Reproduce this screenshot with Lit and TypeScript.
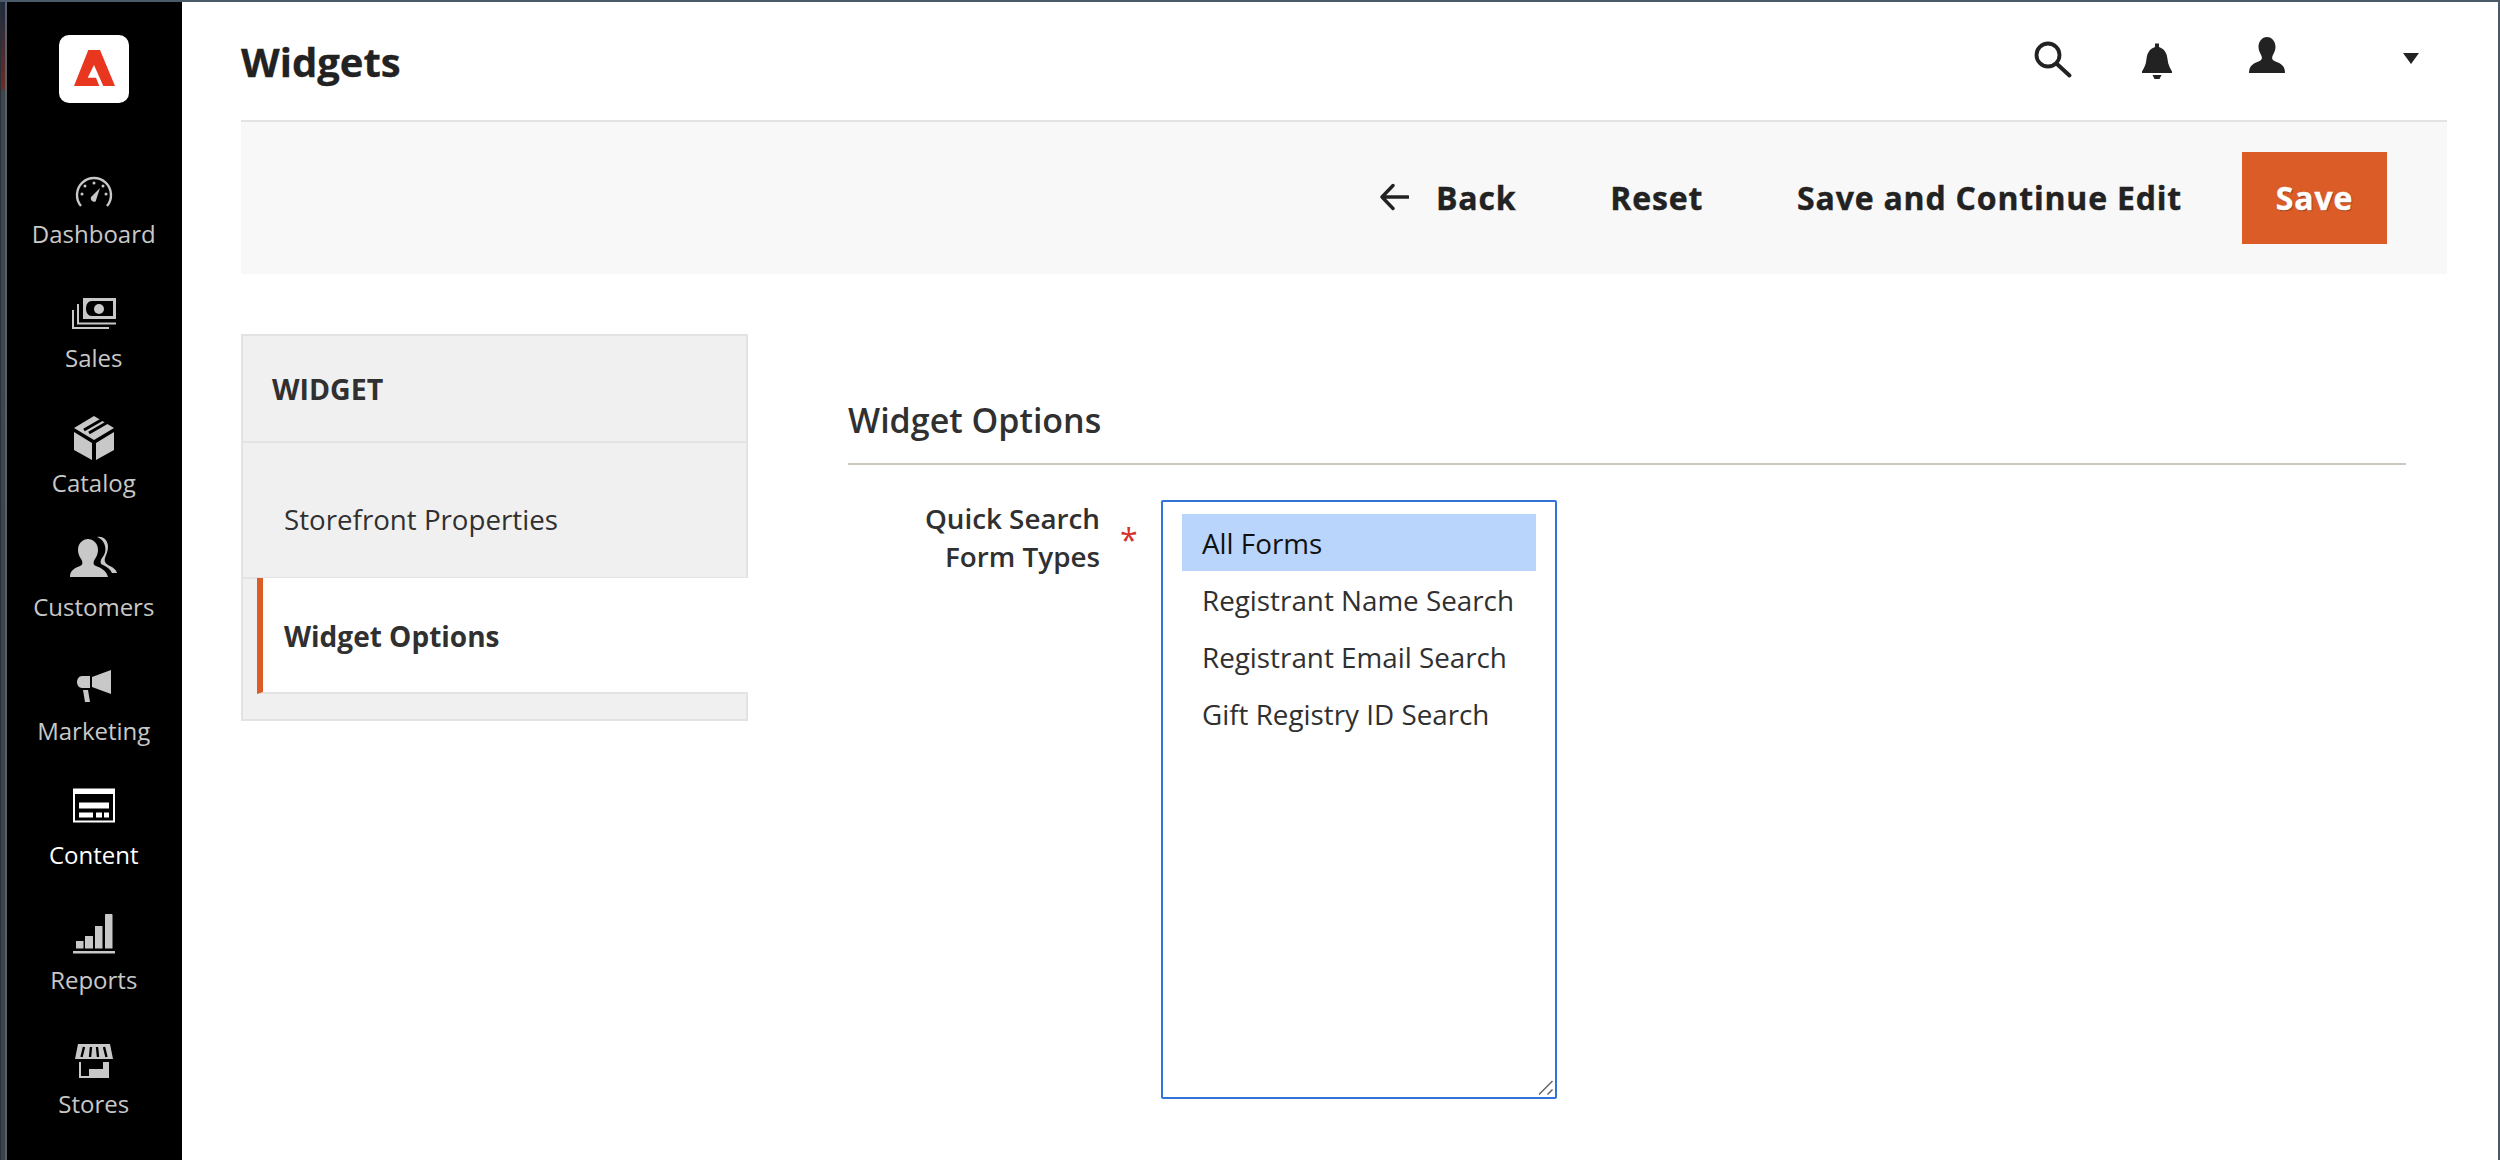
import { LitElement, html, css, svg } from 'lit';
import { customElement } from 'lit/decorators.js';

const navItems = [
  {
    label: 'Dashboard',
    icon: svg`<path d="M17 47a17 17 0 1 1 26 0" fill="none" stroke="currentColor" stroke-width="2.4"/>
      <circle cx="30" cy="24" r="1.5" fill="currentColor"/><circle cx="21" cy="27" r="1.5" fill="currentColor"/><circle cx="39" cy="27" r="1.5" fill="currentColor"/>
      <circle cx="18" cy="35" r="1.5" fill="currentColor"/><circle cx="42" cy="35" r="1.5" fill="currentColor"/>
      <path d="M36 29l-9 9a3.4 3.4 0 0 0 4.6 4.4z" fill="currentColor"/>`,
  },
  {
    label: 'Sales',
    icon: svg`<path fill-rule="evenodd" d="M19 15h33v21H19zM28 18c-4 0-6 3.500-6 7.500s2 7.500 6 7.500h21V18z" fill="currentColor"/>
      <circle cx="35" cy="26" r="5" fill="currentColor"/>
      <path d="M14 21v19.500h38M9 27v18h36" fill="none" stroke="currentColor" stroke-width="2"/>`,
  },
  {
    label: 'Catalog',
    icon: svg`<path d="M30 8l20 12-20 12-20-12z" fill="currentColor"/>
      <path d="M20 22l19-11M25 25l19-11" fill="none" stroke="#000" stroke-width="3"/>
      <path d="M10 24l18 11v17l-18-10zM50 24L32 35v17l18-10z" fill="currentColor"/>`,
  },
  {
    label: 'Customers',
    icon: svg`<path d="M6 45c0-7 5-9 10-11 3-1 3-4 1-7-2-3-3-6-3-9 0-7 5-11 10-11s10 4 10 11c0 3-1 6-3 9-2 3-2 6 1 7 5 2 10 4 12 11z" fill="currentColor"/>
      <path d="M33 5c7-1 11 4 11 10 0 4-2 8-3 11-1 3 0 5 3 7 4 2 8 4 9 8l-5 0c-2-4-5-6-9-8-3-1-3-4-1-7 3-4 4-7 3-12-1-4-3-7-8-9z" fill="currentColor"/>`,
  },
  {
    label: 'Marketing',
    icon: svg`<path d="M28 21l19-7v24l-19-7z" fill="currentColor"/>
      <path d="M26 20v12h-8c-3 0-5-3-5-6s2-6 5-6z" fill="currentColor"/>
      <path d="M19 34h5l2 12h-5z" fill="currentColor"/>`,
  },
  {
    label: 'Content',
    icon: svg`<path fill-rule="evenodd" d="M9 8.500h42v34H9zM11 14v26.500h38V14z" fill="currentColor"/>
      <path d="M15 22.500h30v6H15zM15 32.500h14v5H15zM32 32.500h6v5h-6zM40 32.500h5v5h-5z" fill="currentColor"/>`,
  },
  {
    label: 'Reports',
    icon: svg`<path d="M9 46h42v2.500H9zM12 36h7.500v7.500H12zM21 31h8v12.500h-8zM31 21h7.500v22.500H31zM41 10c0-.6.4-1 1-1h5.500c.6 0 1 .4 1 1v33.500H41z" fill="currentColor"/>`,
  },
  {
    label: 'Stores',
    icon: svg`<path d="M14 15h32l3 15H11z" fill="currentColor"/>
      <path d="M20 18l-2.500 10M27 18l-1 10M33 18l1 10M40 18l2.500 10" fill="none" stroke="#000" stroke-width="2.400"/>
      <path d="M16 33v15h28V33" fill="none" stroke="currentColor" stroke-width="2"/>
      <path d="M25 33v7h14v-7h6v16H25z" fill="currentColor"/>`,
  },
];

@customElement('app-root')
export class AppRoot extends LitElement {
  static styles = css`
    :host {
      display: block;
      height: 1160px;
      overflow: hidden;
      font-family: 'Open Sans', sans-serif;
      color: #303030;
      background: #4a5a68;
      padding: 2px 2px 0 0;
      box-sizing: border-box;
    }

    .window {
      display: flex;
      height: 100%;
      background: #fff;
    }

    .edge {
      width: 7px;
      flex: none;
      background: linear-gradient(#1c2a44 0, #6b2a24 85px, #3a4650 90px, #39434d 100%);
      border-left: 1px solid #2a3036;
      border-right: 2px solid #5a5f64;
      box-sizing: border-box;
    }

    .sidebar {
      width: 175px;
      flex: none;
      box-sizing: border-box;
      padding-right: 1.5px;
      background: #000;
      color: #c8c8c8;
      display: flex;
      flex-direction: column;
      align-items: center;
    }

    .logo {
      width: 70px;
      height: 68px;
      margin-top: 33px;
      margin-bottom: 56px;
      border-radius: 10px;
      background: #fff;
      flex: none;
    }

    .logo svg {
      display: block;
    }

    .nav-item {
      height: 124.3px;
      flex: none;
      width: 100%;
      display: flex;
      flex-direction: column;
      align-items: center;
      font-size: 24px;
      line-height: 30px;
    }

    .nav-item svg {
      display: block;
      flex: none;
    }

    .nav-item.active {
      color: #fff;
    }

    .main {
      flex: 1;
      min-width: 0;
      padding: 0 51px 0 59px;
    }

    .header {
      height: 118px;
      border-bottom: 2px solid #e3e3e3;
      display: flex;
      align-items: flex-start;
    }

    h1 {
      margin: 0;
      flex: 1;
      font-size: 40px;
      line-height: 120px;
      font-weight: 700;
      color: #222;
      -webkit-text-stroke: 0.3px currentColor;
    }

    .tools {
      color: #222;
      padding-top: 32px;
    }

    .tools svg {
      display: block;
    }

    .actions {
      height: 152px;
      background: #f8f8f8;
      display: flex;
      align-items: center;
      justify-content: flex-end;
      padding-right: 60px;
      color: #222;
      font-weight: 700;
      font-size: 32px;
      -webkit-text-stroke: 0.4px currentColor;
    }

    .actions .act {
      display: flex;
      align-items: center;
      letter-spacing: 0.8px;
      padding-bottom: 2px;
    }

    .back {
      gap: 27px;
      margin-right: 94px;
    }

    .reset {
      margin-right: 94px;
    }

    .cont {
      margin-right: 60px;
    }

    .actions .save {
      width: 145px;
      height: 92px;
      box-sizing: border-box;
      background: #db5c27;
      color: #fff;
      justify-content: center;
      text-shadow: 1px 1px 1px #8a3a18;
    }

    .body {
      display: flex;
      padding-top: 60px;
    }

    .tabs {
      width: 507px;
      flex: none;
      height: 387px;
      box-sizing: border-box;
      border: 2px solid #e3e3e3;
      background: #f0f0f0;
    }

    .tabs-head {
      height: 107px;
      box-sizing: border-box;
      border-bottom: 2px solid #e3e3e3;
      padding-left: 29px;
      display: flex;
      align-items: center;
      font-size: 28.5px;
      font-weight: 700;
    }

    .tab {
      height: 136px;
      box-sizing: border-box;
      padding: 18px 0 0 41px;
      display: flex;
      align-items: center;
      font-size: 27.7px;
      border-bottom: 2px solid #e3e3e3;
    }

    .tab.active {
      height: 116px;
      margin: -1px -2px 0 14px;
      padding: 1px 0 0 21px;
      background: #fff;
      border-left: 6px solid #db5c27;
      font-weight: 700;
      font-size: 28px;
    }

    .form {
      flex: 1;
      min-width: 0;
      padding: 61px 41px 0 101px;
    }

    h2 {
      margin: 0 0 0 -1px;
      font-size: 34px;
      font-weight: 600;
      line-height: 50px;
      padding: 0 0 18px 0;
      border-bottom: 2px solid #cdc8bc;
    }

    .field {
      display: flex;
      margin-top: 35px;
    }

    .label {
      width: 251px;
      flex: none;
      text-align: right;
      font-size: 27.8px;
      font-weight: 600;
      line-height: 38px;
      margin-top: -1px;
    }

    .req {
      width: 61px;
      flex: none;
      color: #d6322c;
      font-size: 32px;
      line-height: 38px;
      padding: 21px 0 0 20px;
      box-sizing: border-box;
    }

    .multi {
      position: relative;
      width: 396px;
      height: 599px;
      box-sizing: border-box;
      border: 2px solid #2f74d6;
      border-radius: 2px;
      padding: 12px 19px;
      font-size: 27.8px;
    }

    .opt {
      height: 57px;
      line-height: 58px;
      padding-left: 20px;
      white-space: nowrap;
    }

    .opt.sel {
      background: #b9d5fb;
      color: #111;
    }

    .grip {
      position: absolute;
      right: 0;
      bottom: 0;
      display: block;
    }
  `;

  render() {
    return html`
      <div class="window">
        <div class="edge"></div>
        <nav class="sidebar">
          <div class="logo">
            <svg width="70" height="68" viewBox="0 0 70 68">
              <path d="M29.300 15H41L56 51H44.300L35 30l-6.300 12.700H37L40.300 51H15z" fill="#e8361f"/>
            </svg>
          </div>
          ${navItems.map(
            (item) => html`
              <div class="nav-item ${item.label === 'Content' ? 'active' : ''}">
                <svg width="60" height="60" viewBox="0 0 60 60">${item.icon}</svg>
                <span>${item.label}</span>
              </div>
            `
          )}
        </nav>
        <div class="main">
          <div class="header">
            <h1>Widgets</h1>
            <div class="tools">
              <svg width="470" height="60" viewBox="0 0 470 60">
                <circle cx="71" cy="21" r="11.500" fill="none" stroke="currentColor" stroke-width="3.800"/>
                <path d="M80.500 30.500l12 11" stroke="currentColor" stroke-width="4" stroke-linecap="round"/>
                <path d="M178 9.500h4V13c6 2 8 7 8.500 12 .5 6 3 10 4.500 12.500V39h-30v-1.500c1.500-2.500 4-6.500 4.500-12.500 .5-5 2.500-10 8.500-12zM175.500 41h9l-2 4h-5z" fill="currentColor"/>
                <path d="M290 3c5 0 8.500 4.500 8.500 10 0 4-2 6.500-3 9-1 3 0 4 3 5.500 5 2 9.500 4 9.500 11.500h-36c0-7.500 4.500-9.500 9.500-11.500 3-1.500 4-2.500 3-5.500-1-2.500-3-5-3-9 0-5.500 3.500-10 8.500-10z" fill="currentColor"/>
                <path d="M426 19h16l-8 11z" fill="currentColor"/>
              </svg>
            </div>
          </div>
          <div class="actions">
            <div class="act back">
              <svg width="30" height="30" viewBox="0 0 30 30">
                <path d="M14 3.500L3 15l11 11.500M4 15h25" fill="none" stroke="currentColor" stroke-width="3.400" stroke-linecap="round" stroke-linejoin="round"/>
              </svg>
              <span>Back</span>
            </div>
            <div class="act reset">Reset</div>
            <div class="act cont">Save and Continue Edit</div>
            <div class="act save">Save</div>
          </div>
          <div class="body">
            <div class="tabs">
              <div class="tabs-head">WIDGET</div>
              <div class="tab">Storefront Properties</div>
              <div class="tab active">Widget Options</div>
            </div>
            <div class="form">
              <h2>Widget Options</h2>
              <div class="field">
                <div class="label">Quick Search<br />Form Types</div>
                <div class="req">*</div>
                <div class="multi">
                  <div class="opt sel">All Forms</div>
                  <div class="opt">Registrant Name Search</div>
                  <div class="opt">Registrant Email Search</div>
                  <div class="opt">Gift Registry ID Search</div>
                  <svg class="grip" width="18" height="18" viewBox="0 0 18 18">
                    <path d="M2 15.500L15.500 2M10.500 15.500l5-5" stroke="#666" stroke-width="1.500" fill="none"/>
                  </svg>
                </div>
              </div>
            </div>
          </div>
        </div>
      </div>
    `;
  }
}
